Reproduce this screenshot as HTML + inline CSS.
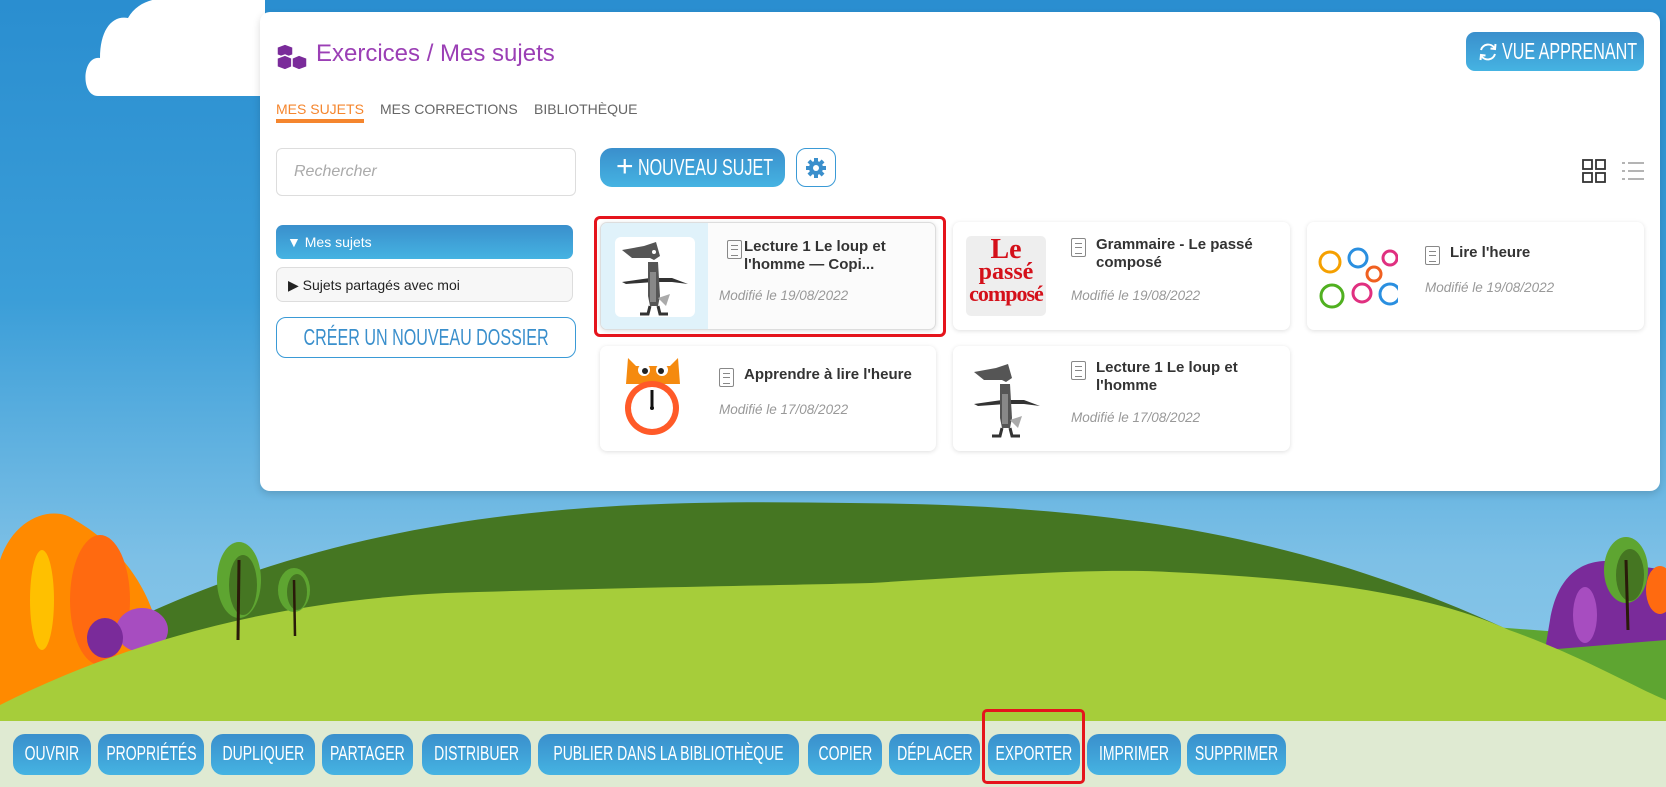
<!DOCTYPE html>
<html><head><meta charset="utf-8">
<style>
*{box-sizing:border-box;margin:0;padding:0}
body{width:1666px;height:787px;overflow:hidden;position:relative;font-family:"Liberation Sans",sans-serif;background:linear-gradient(#2a8ed0 0px,#3b9ed8 300px,#7dc0e6 560px,#8cc8ea 720px)}
.abs{position:absolute}
.n{display:inline-block;transform:scaleX(.7);white-space:nowrap;transform-origin:center}
.panel{left:260px;top:12px;width:1400px;height:479px;background:#fff;border-radius:10px;box-shadow:0 3px 8px rgba(0,0,0,.15)}
.title{left:316px;top:40px;font-size:24px;color:#9b3fb5}
.btn{background:linear-gradient(#3a8fcc,#45b3e2);color:#fff;border-radius:9px;display:flex;align-items:center;justify-content:center;white-space:nowrap;overflow:visible}
.tab{top:101px;font-size:14px;color:#666;white-space:nowrap}
.card{background:#fff;border-radius:7px;box-shadow:0 1px 5px rgba(0,0,0,.13)}
.ct{font-size:15px;font-weight:bold;color:#333;line-height:18px}
.cd{font-size:13.5px;font-style:italic;color:#999}
.doc{width:15px;height:19px;border:1.3px solid #888;border-radius:2px}
.doc:before{content:"";position:absolute;left:3px;top:4px;width:7px;height:9px;border-top:1.3px solid #888;border-bottom:1.3px solid #888}
.doc:after{content:"";position:absolute;left:3px;top:8px;width:7px;height:1.3px;background:#888}
.tb{top:734px;height:41px;font-size:20px;border-radius:12px}
</style></head><body>
<!-- cloud -->
<svg class="abs" style="left:0;top:0" width="270" height="100"><path d="M98 96 C80 96 82 55 100 58 C100 30 112 15 128 18 C138 0 160 -4 175 0 L265 0 L265 96 Z" fill="#fff"/></svg>
<!-- landscape -->
<svg class="abs" style="left:0;top:480px" width="1666" height="245" viewBox="0 480 1666 245">
<path d="M0 700 C100 640 300 610 450 590 L870 580 L1666 640 L1666 725 L0 725Z" fill="#5ea531"/>
<path d="M150 612 C400 500 650 500 850 503 C1100 505 1300 530 1530 640 L150 640Z" fill="#457622"/>
<path d="M0 560 C15 515 55 505 75 520 C110 540 150 580 160 640 L0 720Z" fill="#ff8a00"/>
<ellipse cx="100" cy="600" rx="30" ry="65" fill="#ff6a10"/>
<ellipse cx="42" cy="600" rx="12" ry="50" fill="#ffc000"/>
<ellipse cx="142" cy="630" rx="26" ry="22" fill="#a74dc0"/>
<ellipse cx="105" cy="638" rx="18" ry="20" fill="#7a2b9a"/>
<path d="M1550 620 C1560 560 1600 555 1630 565 L1666 570 L1666 640 L1545 650Z" fill="#7a2b9a"/>
<ellipse cx="1585" cy="615" rx="12" ry="28" fill="#a74dc0"/>
<path d="M0 705 C150 630 300 600 446 593 C600 588 800 585 871 583 C1000 575 1100 568 1169 572 C1300 578 1420 590 1509 630 C1580 655 1640 690 1666 700 L1666 725 L0 725Z" fill="#a6cd3a"/>
<ellipse cx="239" cy="580" rx="22" ry="38" fill="#5ea531"/><ellipse cx="243" cy="585" rx="14" ry="30" fill="#457622"/>
<path d="M239 560 L238 640" stroke="#2a1a0a" stroke-width="3"/>
<ellipse cx="294" cy="590" rx="16" ry="22" fill="#5ea531"/><ellipse cx="297" cy="592" rx="10" ry="18" fill="#457622"/>
<path d="M294 580 L295 636" stroke="#2a1a0a" stroke-width="2.5"/>
<ellipse cx="1626" cy="570" rx="22" ry="33" fill="#5ea531"/><ellipse cx="1630" cy="575" rx="14" ry="26" fill="#457622"/>
<path d="M1626 560 L1628 630" stroke="#2a1a0a" stroke-width="3"/>
<ellipse cx="1660" cy="590" rx="14" ry="24" fill="#ff6a10"/>
</svg>
<!-- panel -->
<div class="abs panel"></div>
<svg class="abs" style="left:276px;top:43px" width="32" height="28" viewBox="0 0 32 28"><g fill="#7a2b9a" stroke="#fff" stroke-width="1.5"><path d="M9 1 L17 4 L17 12 L9 15 L1 12 L1 4Z"/><path d="M1 15 L9 12 L16 15 L16 24 L9 27 L1 24Z"/><path d="M16 15 L23 12 L31 15 L31 24 L23 27 L16 24Z"/></g></svg>
<div class="abs title">Exercices / Mes sujets</div>
<div class="abs btn" style="left:1466px;top:32px;width:178px;height:39px;font-size:23px;padding-left:28px"><svg class="abs" style="left:11px;top:9px" width="22" height="22" viewBox="0 0 22 22"><path d="M4 9 A7.5 7.5 0 0 1 17.5 7 M18 13 A7.5 7.5 0 0 1 4.5 15" stroke="#fff" stroke-width="2" fill="none"/><path d="M18.5 3 L18 8 L13.5 7.5" stroke="#fff" stroke-width="2" fill="none"/><path d="M3.5 19 L4 14 L8.5 14.5" stroke="#fff" stroke-width="2" fill="none"/></svg><span class="n">VUE APPRENANT</span></div>
<div class="abs tab" style="left:276px;color:#f5862e">MES SUJETS</div>
<div class="abs" style="left:276px;top:119px;width:88px;height:4px;background:#f5862e"></div>
<div class="abs tab" style="left:380px">MES CORRECTIONS</div>
<div class="abs tab" style="left:534px">BIBLIOTHÈQUE</div>
<div class="abs" style="left:276px;top:148px;width:300px;height:48px;border:1px solid #ddd;border-radius:6px;padding:14px 17px;font-size:16px;font-style:italic;color:#aaa">Rechercher</div>
<div class="abs btn" style="left:600px;top:148px;width:185px;height:39px;font-size:23px;border-radius:12px;padding-left:26px"><span class="abs" style="left:16px;top:2px;font-size:30px;font-weight:300">+</span><span class="n">NOUVEAU SUJET</span></div>
<div class="abs" style="left:796px;top:148px;width:40px;height:39px;border:1.5px solid #3a9ad6;border-radius:10px;display:flex;align-items:center;justify-content:center"><svg width="22" height="22" viewBox="0 0 22 22"><g fill="#3a8fcc"><circle cx="11" cy="11" r="7"/><rect x="9" y="1" width="4" height="20"/><rect x="1" y="9" width="20" height="4"/><rect x="9" y="1" width="4" height="20" transform="rotate(45 11 11)"/><rect x="9" y="1" width="4" height="20" transform="rotate(-45 11 11)"/></g><circle cx="11" cy="11" r="3" fill="#fff"/></svg></div>
<svg class="abs" style="left:1582px;top:159px" width="24" height="24"><g fill="none" stroke="#333" stroke-width="1.8"><rect x="1" y="1" width="9" height="9"/><rect x="14" y="1" width="9" height="9"/><rect x="1" y="14" width="9" height="9"/><rect x="14" y="14" width="9" height="9"/></g></svg>
<svg class="abs" style="left:1622px;top:160px" width="22" height="22"><g stroke="#aaa" stroke-width="1.8"><path d="M0 3H3M6 3H22M0 11H3M6 11H22M0 19H3M6 19H22"/></g></svg>
<!-- folders -->
<div class="abs" style="left:276px;top:225px;width:297px;height:34px;background:linear-gradient(#3a8fcc,#45b3e2);border-radius:7px;color:#fff;font-size:14px;padding:9px 11px">▼ Mes sujets</div>
<div class="abs" style="left:276px;top:267px;width:297px;height:35px;background:#f7f7f7;border:1px solid #ddd;border-radius:7px;color:#222;font-size:14px;padding:9px 11px">▶ Sujets partagés avec moi</div>
<div class="abs" style="left:276px;top:317px;width:300px;height:41px;border:1.5px solid #3a9ad6;border-radius:10px;color:#3a8fcc;font-size:23px;display:flex;align-items:center;justify-content:center"><span class="n">CRÉER UN NOUVEAU DOSSIER</span></div>
<!-- cards -->
<div class="abs" style="left:594px;top:216px;width:352px;height:121px;border:3px solid #e5141c;border-radius:6px"></div>
<div class="abs card" style="left:600px;top:222px;width:336px;height:108px;background:#fbfbfb;border:1px solid #ddd;overflow:hidden"><div style="position:absolute;left:0;top:0;width:107px;height:108px;background:#e0f2fa"></div><div style="position:absolute;left:14px;top:14px;width:80px;height:80px;background:#fff;border-radius:6px"></div></div>
<svg class="abs" style="left:614px;top:236px" width="80" height="80" viewBox="0 0 80 80"><path d="M8 14 L30 10 L42 6 L46 20 L40 24 L36 22 L18 22Z" fill="#555"/><circle cx="40" cy="16" r="2" fill="#fff"/><path d="M8 46 L36 42 L58 42 L74 48 L58 46 L40 46 L12 48Z" fill="#333"/><path d="M34 26 L44 26 L46 60 L44 70 L36 70 L34 60Z" fill="#555"/><path d="M36 36 L42 36 L42 66 L36 66Z" fill="#888"/><path d="M44 62 L56 58 L52 70Z" fill="#aaa"/><path d="M36 70 L34 78 L26 78 M44 70 L46 78 L54 78" stroke="#333" stroke-width="3" fill="none"/></svg>
<div class="abs doc" style="left:727px;top:240px"></div>
<div class="abs ct" style="left:744px;top:238px">Lecture 1 Le loup et<br>l'homme — Copi...</div>
<div class="abs cd" style="left:719px;top:288px">Modifié le 19/08/2022</div>

<div class="abs card" style="left:953px;top:222px;width:337px;height:108px"></div>
<div class="abs" style="left:966px;top:236px;width:80px;height:80px;background:#eee;border-radius:5px;overflow:hidden;font-family:'Liberation Serif',serif;color:#d4101a;font-weight:bold;text-align:center;line-height:22px"><div style="font-size:28px;margin-top:3px">Le</div><div style="font-size:24px">passé</div><div style="font-size:22px;letter-spacing:-1px">composé</div></div>
<div class="abs doc" style="left:1071px;top:238px"></div>
<div class="abs ct" style="left:1096px;top:236px">Grammaire - Le passé<br>composé</div>
<div class="abs cd" style="left:1071px;top:288px">Modifié le 19/08/2022</div>

<div class="abs card" style="left:1307px;top:222px;width:337px;height:108px"></div>
<svg class="abs" style="left:1318px;top:236px" width="80" height="80"><g fill="#fff" stroke-width="3"><circle cx="12" cy="26" r="10" stroke="#f5a000"/><circle cx="40" cy="22" r="9" stroke="#2a8fe0"/><circle cx="56" cy="38" r="7" stroke="#f06020"/><circle cx="72" cy="22" r="7" stroke="#e03080"/><circle cx="14" cy="60" r="11" stroke="#50b020"/><circle cx="44" cy="57" r="9" stroke="#e03080"/><circle cx="72" cy="58" r="10" stroke="#2a8fe0"/></g></svg>
<div class="abs doc" style="left:1425px;top:246px"></div>
<div class="abs ct" style="left:1450px;top:244px">Lire l'heure</div>
<div class="abs cd" style="left:1425px;top:280px">Modifié le 19/08/2022</div>

<div class="abs card" style="left:600px;top:346px;width:336px;height:105px"></div>
<svg class="abs" style="left:618px;top:356px" width="70" height="82" viewBox="0 0 70 82"><path d="M10 2 L18 10 L52 10 L60 2 L62 28 L8 28Z" fill="#f58a0f"/><circle cx="26" cy="14" r="6" fill="#fff"/><circle cx="44" cy="14" r="6" fill="#fff"/><circle cx="27" cy="15" r="3" fill="#222"/><circle cx="43" cy="15" r="3" fill="#222"/><circle cx="34" cy="52" r="27" fill="#ff5a28"/><circle cx="34" cy="52" r="21" fill="#fff"/><path d="M34 52 L34 34" stroke="#111" stroke-width="3"/><circle cx="34" cy="52" r="2" fill="#111"/></svg>
<div class="abs doc" style="left:719px;top:368px"></div>
<div class="abs ct" style="left:744px;top:366px">Apprendre à lire l'heure</div>
<div class="abs cd" style="left:719px;top:402px">Modifié le 17/08/2022</div>

<div class="abs card" style="left:953px;top:346px;width:337px;height:105px"></div>
<svg class="abs" style="left:966px;top:358px" width="80" height="80" viewBox="0 0 80 80"><path d="M8 14 L30 10 L42 6 L46 20 L40 24 L36 22 L18 22Z" fill="#555"/><path d="M8 46 L36 42 L58 42 L74 48 L58 46 L40 46 L12 48Z" fill="#333"/><path d="M34 26 L44 26 L46 60 L44 70 L36 70 L34 60Z" fill="#555"/><path d="M36 36 L42 36 L42 66 L36 66Z" fill="#888"/><path d="M44 62 L56 58 L52 70Z" fill="#aaa"/><path d="M36 70 L34 78 L26 78 M44 70 L46 78 L54 78" stroke="#333" stroke-width="3" fill="none"/></svg>
<div class="abs doc" style="left:1071px;top:361px"></div>
<div class="abs ct" style="left:1096px;top:359px">Lecture 1 Le loup et<br>l'homme</div>
<div class="abs cd" style="left:1071px;top:410px">Modifié le 17/08/2022</div>

<!-- toolbar -->
<div class="abs" style="left:0;top:721px;width:1666px;height:66px;background:#dfead2"></div>
<div class="abs" style="left:982px;top:709px;width:103px;height:75px;border:3px solid #e5141c;border-radius:5px"></div>
<div class="abs btn tb" style="left:13px;width:78px"><span class="n">OUVRIR</span></div>
<div class="abs btn tb" style="left:98px;width:106px"><span class="n">PROPRIÉTÉS</span></div>
<div class="abs btn tb" style="left:211px;width:104px"><span class="n">DUPLIQUER</span></div>
<div class="abs btn tb" style="left:322px;width:91px"><span class="n">PARTAGER</span></div>
<div class="abs btn tb" style="left:422px;width:109px"><span class="n">DISTRIBUER</span></div>
<div class="abs btn tb" style="left:538px;width:261px"><span class="n">PUBLIER DANS LA BIBLIOTHÈQUE</span></div>
<div class="abs btn tb" style="left:808px;width:74px"><span class="n">COPIER</span></div>
<div class="abs btn tb" style="left:889px;width:91px"><span class="n">DÉPLACER</span></div>
<div class="abs btn tb" style="left:988px;width:92px"><span class="n">EXPORTER</span></div>
<div class="abs btn tb" style="left:1087px;width:94px"><span class="n">IMPRIMER</span></div>
<div class="abs btn tb" style="left:1187px;width:99px"><span class="n">SUPPRIMER</span></div>
</body></html>
